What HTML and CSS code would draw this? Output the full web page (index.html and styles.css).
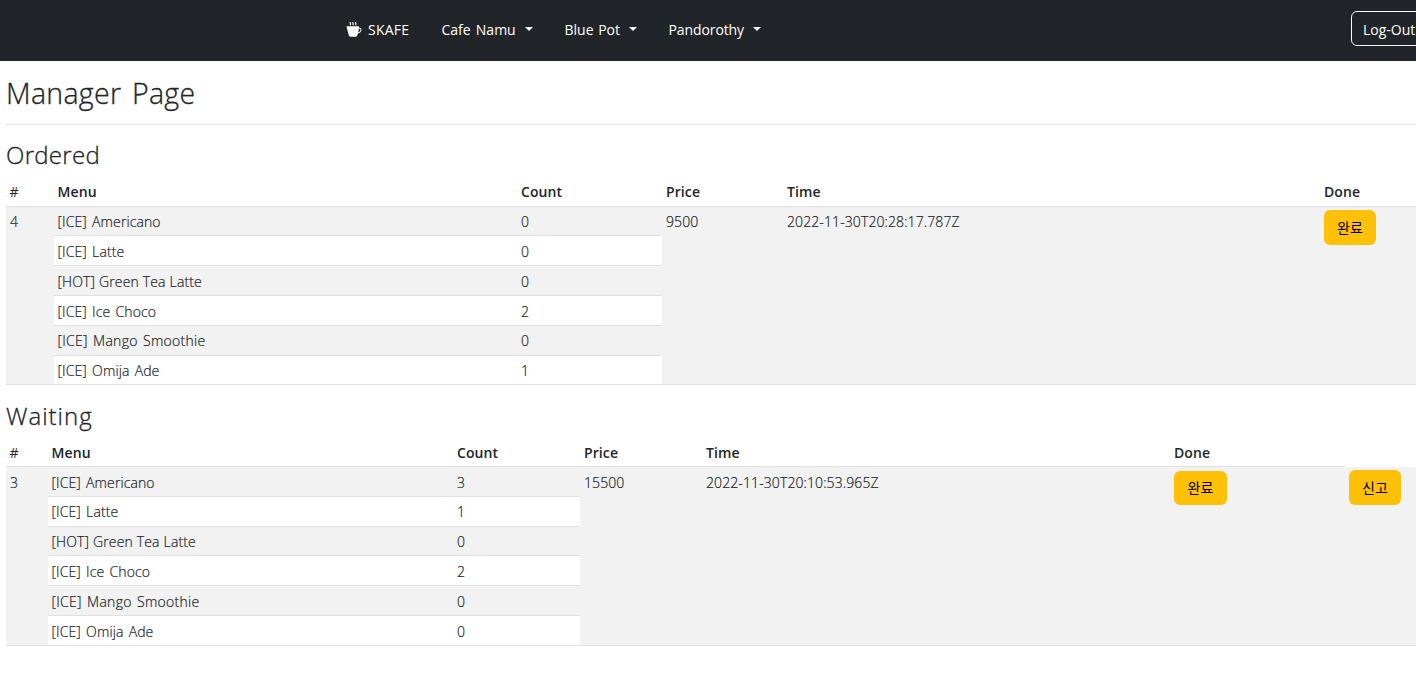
FILE: index.html
```html
<!DOCTYPE html>
<html lang="ko">
<head>
<meta charset="utf-8">
<title>SKAFE</title>
<link rel="stylesheet" href="styles.css">
</head>
<body>
<nav class="navbar">
  <a class="brand"><svg class="cup" width="16" height="16" viewBox="0 0 16 16" fill="#fff"><path d="M4.500 0c-1 1 .6 1.700-.2 3.200M7.200 0c-1 1 .6 1.700-.2 3.200M9.900 0c-1 1 .6 1.700-.2 3.200" fill="none" stroke="#fff" stroke-width="1.200"/><path fill-rule="evenodd" d="M.9 4.300h12.100l-.1 1.400h.6a2 2 0 0 1 1.900 2.300c-.2 2-1.600 3.200-3.500 3.400l-.8 2.400a1.500 1.500 0 0 1-1.300.9H4.300a1.500 1.500 0 0 1-1.400-1.100L.5 4.800a.5.5 0 0 1 .4-.5zm11.900 2.400-.5 3.600c1.200-.2 2-1 2.100-2.300.1-.8-.3-1.300-.9-1.300z"/></svg><span>SKAFE</span></a>
  <a class="drop d1"><span>Cafe Namu</span></a>
  <a class="drop d2"><span>Blue Pot</span></a>
  <a class="drop d3"><span>Pandorothy</span></a>
  <button class="logout">Log-Out</button>
</nav>
<main class="page">
  <h1 class="title">Manager Page</h1>
  <hr class="rule">
  <h2 class="section">Ordered</h2>
  <table class="orders ordered">
    <colgroup><col class="c-num"><col class="c-menu"><col class="c-count"><col class="c-price"><col class="c-time"><col class="c-done"></colgroup>
    <thead><tr><th>#</th><th>Menu</th><th>Count</th><th>Price</th><th>Time</th><th>Done</th></tr></thead>
    <tbody>
      <tr class="short"><td rowspan="6">4</td><td class="item">[ICE] Americano</td><td>0</td><td rowspan="6">9500</td><td rowspan="6">2022-11-30T20:28:17.787Z</td><td rowspan="6"><button class="action">완료</button></td></tr>
      <tr class="alt lowered"><td class="item">[ICE] Latte</td><td>0</td></tr>
      <tr class="lowered"><td class="item tight">[HOT] Green Tea Latte</td><td>0</td></tr>
      <tr class="alt lowered"><td class="item">[ICE] Ice Choco</td><td>2</td></tr>
      <tr><td class="item wide">[ICE] Mango Smoothie</td><td>0</td></tr>
      <tr class="alt short"><td class="item">[ICE] Omija Ade</td><td>1</td></tr>
    </tbody>
  </table>
  <h2 class="section spread">Waiting</h2>
  <table class="orders waiting">
    <colgroup><col class="c-num"><col class="c-menu"><col class="c-count"><col class="c-price"><col class="c-time"><col class="c-done"><col class="c-report"></colgroup>
    <thead><tr><th>#</th><th>Menu</th><th>Count</th><th>Price</th><th>Time</th><th>Done</th><td class="blank"></td></tr></thead>
    <tbody>
      <tr class="lowered"><td rowspan="6">3</td><td class="item">[ICE] Americano</td><td>3</td><td rowspan="6">15500</td><td rowspan="6">2022-11-30T20:10:53.965Z</td><td rowspan="6"><button class="action low">완료</button></td><td rowspan="6"><button class="action">신고</button></td></tr>
      <tr class="alt"><td class="item">[ICE] Latte</td><td>1</td></tr>
      <tr class="short"><td class="item tight">[HOT] Green Tea Latte</td><td>0</td></tr>
      <tr class="alt lowered"><td class="item">[ICE] Ice Choco</td><td>2</td></tr>
      <tr class="lowered"><td class="item wide">[ICE] Mango Smoothie</td><td>0</td></tr>
      <tr class="alt lowered"><td class="item">[ICE] Omija Ade</td><td>0</td></tr>
    </tbody>
  </table>
</main>
</body>
</html>
```
FILE: styles.css
```css
* { box-sizing: border-box; }
html { overflow: hidden; }
body {
  margin: 0;
  overflow: hidden;
  background: #fff;
  color: #212529;
  font-family: "Open Sans", "Noto Sans CJK KR", sans-serif;
  font-size: 14px;
  line-height: 22px;
}
.navbar {
  display: flex;
  align-items: center;
  height: 61px;
  padding: 0 0 2px 346px;
  background: #212529;
  color: #fff;
  white-space: nowrap;
}
.brand { display: flex; flex: none; width: 95.500px; gap: 6px; letter-spacing: .2px; }
.cup { margin-top: 3px; flex: none; }
.drop { display: flex; flex: none; align-items: center; justify-content: space-between; }
.drop::after {
  content: "";
  border-top: 4.500px solid #fff;
  border-left: 4.500px solid transparent;
  border-right: 4.500px solid transparent;
  margin-top: -2px;
}
.d1 { width: 91px; margin-right: 32px; word-spacing: 1.500px; }
.d2 { width: 72px; margin-right: 32px; word-spacing: 1px; }
.d3 { width: 92px; margin-right: 590.500px; letter-spacing: -.1px; }
.logout {
  flex: none;
  height: 35px;
  margin-top: -2px;
  padding: 2px 11px 0;
  border: 1px solid #f8f9fa;
  border-radius: 6px;
  background: transparent;
  color: #fff;
  font: inherit;
}
.page { width: 1440px; padding: 15px 0 0 6px; }
.title { margin: 0; height: 48px; font-size: 28.500px; line-height: 34px; font-weight: 300; letter-spacing: .3px; word-spacing: 3px; -webkit-text-stroke: .3px; }
.rule { margin: 0 0 15px; border: 0; border-top: 1px solid #dee2e6; }
.section { margin: 0; height: 38px; font-size: 24px; line-height: 29px; font-weight: 300; letter-spacing: .3px; -webkit-text-stroke: .3px; }
.section.spread { letter-spacing: 1px; padding-top: 1px; }
.orders { width: 1434px; table-layout: fixed; border-collapse: separate; border-spacing: 0; margin-bottom: 15px; }
.orders th, .orders td { padding: 0 4px; border-bottom: 1px solid #dee2e6; text-align: left; vertical-align: top; white-space: nowrap; }
.orders th { height: 29px; padding-top: 3px; font-weight: 600; letter-spacing: .1px; }
.orders th:first-child { font-weight: 400; }
.orders th:first-child, .orders th:nth-child(2), .orders td.item { padding-left: 3.500px; }
.waiting th { padding-top: 4px; }
.orders tbody tr { height: 30px; }
.orders tbody tr.short { height: 29px; }
.orders tbody td { padding-top: 4px; background: #f2f2f2; font-weight: 300; letter-spacing: .1px; word-spacing: 1.500px; -webkit-text-stroke: .2px; }
.orders tbody td.tight { word-spacing: .3px; }
.orders tbody td.wide { letter-spacing: .25px; word-spacing: 1.600px; }
.orders tbody .alt td { background: #fff; }
.orders tbody .lowered td { padding-top: 5px; }
.orders td.blank { border-bottom-color: #fff; }
.ordered .c-num { width: 48px; }
.ordered .c-menu { width: 463px; }
.ordered .c-count { width: 145px; }
.ordered .c-price { width: 121px; }
.ordered .c-time { width: 537px; }
.waiting .c-num { width: 42px; }
.waiting .c-menu { width: 405px; }
.waiting .c-count { width: 127px; }
.waiting .c-price { width: 122px; }
.waiting .c-time { width: 468px; }
.waiting .c-done { width: 175px; }
.action {
  display: block;
  width: 52px;
  height: 35px;
  margin-top: -1px;
  padding: 0;
  border: 0;
  border-radius: 6px;
  background: #ffc107;
  color: #000;
  font: inherit;
  font-weight: 400;
  -webkit-text-stroke: 0;
}
.lowered .action { margin-top: -2px; }
.lowered .action.low { width: 53px; height: 34px; margin-top: -1px; }
```
